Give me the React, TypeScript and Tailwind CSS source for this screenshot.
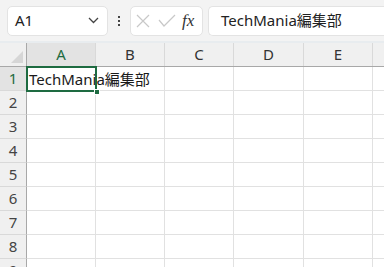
import React from "react";

const cols = ["A", "B", "C", "D", "E", ""];
const colW = [69, 69, 69, 70, 69, 20];
const rows = [1, 2, 3, 4, 5, 6, 7, 8, 9];

export default function App() {
  const font = { fontFamily: '"Noto Sans", "Noto Sans CJK JP", sans-serif' };
  return (
    <div className="w-[384px] h-[267px] overflow-hidden bg-white" style={font}>
      {/* Top bar */}
      <div className="h-[41px] bg-[#f3f3f3] flex items-center pl-[7px]">
        <div className="w-[101px] h-[30px] bg-white rounded-[5px] border border-[#e3e3e3] flex items-center justify-between pl-[7px] pr-[8px]">
          <span className="text-[15px] text-[#222]">A1</span>
          <svg width="11" height="7" viewBox="0 0 11 7">
            <path d="M1 1 L5.5 5.5 L10 1" stroke="#444" strokeWidth="1.3" fill="none" />
          </svg>
        </div>
        <div className="w-[22px] flex flex-col items-center gap-[2px]">
          <div className="w-[2px] h-[2px] bg-[#444]" />
          <div className="w-[2px] h-[2px] bg-[#444]" />
          <div className="w-[2px] h-[2px] bg-[#444]" />
        </div>
        <div className="w-[73px] h-[30px] bg-white rounded-[5px] border border-[#e3e3e3] flex items-center pl-[4px] gap-[7px]">
          <svg width="16" height="16" viewBox="0 0 16 16">
            <path d="M2 2 L14 14 M14 2 L2 14" stroke="#c8c8c8" strokeWidth="1.2" />
          </svg>
          <svg width="18" height="14" viewBox="0 0 18 14">
            <path d="M1 6 L6 12 L17 1" stroke="#c8c8c8" strokeWidth="1.2" fill="none" />
          </svg>
          <span
            className="text-[17px] italic text-[#333] leading-none ml-[-1px]"
            style={{ fontFamily: '"Liberation Serif", serif' }}
          >
            fx
          </span>
        </div>
        <div className="ml-[5px] flex-1 h-[30px] bg-white rounded-l-[5px] border border-r-0 border-[#e3e3e3] flex items-center pl-[12px]">
          <span className="text-[15px] text-[#222]">TechMania編集部</span>
        </div>
      </div>
      <div className="h-[2px] bg-[#e8ecef]" />
      {/* Grid */}
      <div className="relative">
        <div className="flex h-[24px] bg-[#f0f0f0] border-b border-[#a8a8a8]">
          <div className="w-[27px] shrink-0 border-r border-[#a8a8a8] relative">
            <svg className="absolute right-[3px] bottom-[3px]" width="12" height="12" viewBox="0 0 12 12">
              <path d="M12 0 L12 12 L0 12 Z" fill="#d6d6d6" />
            </svg>
          </div>
          {cols.map((c, i) => (
            <div
              key={i}
              className={`shrink-0 flex items-center justify-center text-[15px] border-r border-[#d9d9d9] ${
                i === 0 ? "bg-[#e3e3e3] text-[#1e6b41]" : "text-[#333]"
              }`}
              style={{ width: colW[i] }}
            >
              {c}
            </div>
          ))}
        </div>
        {rows.map((r) => (
          <div key={r} className="flex h-[24px]">
            <div
              className={`w-[27px] shrink-0 border-r border-b border-r-[#a8a8a8] border-b-[#d9d9d9] flex items-center justify-center text-[15px] ${
                r === 1 ? "bg-[#e3e3e3] text-[#1e6b41]" : "bg-[#f0f0f0] text-[#444]"
              }`}
            >
              {r}
            </div>
            {cols.map((c, i) => (
              <div
                key={i}
                className={`shrink-0 border-b border-[#e1e1e1] relative ${
                  r === 1 && i === 0 ? "" : "border-r"
                }`}
                style={{ width: colW[i] }}
              >
                {r === 1 && i === 0 && (
                  <span className="absolute left-[2px] top-[1px] whitespace-nowrap text-[15px] text-[#1a1a1a] z-10">
                    TechMania編集部
                  </span>
                )}
              </div>
            ))}
          </div>
        ))}
        {/* selection */}
        <div className="absolute left-[26px] top-[23px] w-[71px] h-[26px] border-2 border-[#1e6b41] z-20 pointer-events-none" />
        <div className="absolute left-[94px] top-[46px] w-[6px] h-[6px] bg-[#1e6b41] border border-white z-30" />
      </div>
    </div>
  );
}
